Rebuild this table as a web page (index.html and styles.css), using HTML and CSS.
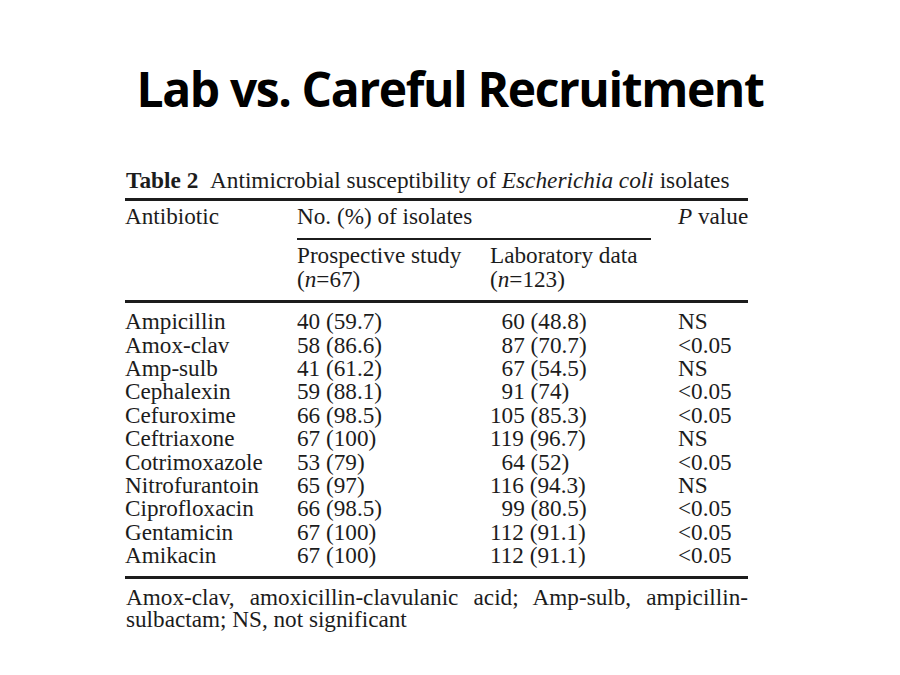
FILE: index.html
```html
<!DOCTYPE html>
<html>
<head>
<meta charset="utf-8">
<link rel="stylesheet" href="styles.css">
</head>
<body>
<div class="slide">
  <h1 class="title">Lab vs. Careful Recruitment</h1>
  <div class="figure">
    <div class="caption"><b>Table 2</b>&#8194;Antimicrobial susceptibility of <i>Escherichia coli</i> isolates</div>
    <table class="data">
      <colgroup>
        <col class="c1"><col class="c2"><col class="c3"><col class="c4">
      </colgroup>
      <thead>
        <tr class="h1row">
          <th>Antibiotic</th>
          <th colspan="2" class="span"><div class="spanlabel">No. (%) of isolates</div></th>
          <th><i>P</i> value</th>
        </tr>
        <tr class="h2row">
          <th></th>
          <th>Prospective study<br>(<i>n</i>=67)</th>
          <th>Laboratory data<br>(<i>n</i>=123)</th>
          <th></th>
        </tr>
      </thead>
      <tbody>
        <tr class="first"><td>Ampicillin</td><td>40 (59.7)</td><td>&#8199;60 (48.8)</td><td>NS</td></tr>
        <tr><td>Amox-clav</td><td>58 (86.6)</td><td>&#8199;87 (70.7)</td><td>&lt;0.05</td></tr>
        <tr><td>Amp-sulb</td><td>41 (61.2)</td><td>&#8199;67 (54.5)</td><td>NS</td></tr>
        <tr><td>Cephalexin</td><td>59 (88.1)</td><td>&#8199;91 (74)</td><td>&lt;0.05</td></tr>
        <tr><td>Cefuroxime</td><td>66 (98.5)</td><td>105 (85.3)</td><td>&lt;0.05</td></tr>
        <tr><td>Ceftriaxone</td><td>67 (100)</td><td>119 (96.7)</td><td>NS</td></tr>
        <tr><td>Cotrimoxazole</td><td>53 (79)</td><td>&#8199;64 (52)</td><td>&lt;0.05</td></tr>
        <tr><td>Nitrofurantoin</td><td>65 (97)</td><td>116 (94.3)</td><td>NS</td></tr>
        <tr><td>Ciprofloxacin</td><td>66 (98.5)</td><td>&#8199;99 (80.5)</td><td>&lt;0.05</td></tr>
        <tr><td>Gentamicin</td><td>67 (100)</td><td>112 (91.1)</td><td>&lt;0.05</td></tr>
        <tr class="last"><td>Amikacin</td><td>67 (100)</td><td>112 (91.1)</td><td>&lt;0.05</td></tr>
      </tbody>
    </table>
    <p class="note">Amox-clav, amoxicillin-clavulanic acid; Amp-sulb, ampicillin-sulbactam; NS, not significant</p>
  </div>
</div>
</body>
</html>
```

FILE: styles.css
```css
html, body {
  margin: 0;
  padding: 0;
  background: #ffffff;
}
.slide {
  width: 900px;
  height: 675px;
  overflow: hidden;
  display: flex;
  flex-direction: column;
  align-items: center;
}
.title {
  margin: 65px 0 0 0;
  font-family: "Open Sans", "Liberation Sans", sans-serif;
  font-weight: 700;
  font-size: 48px;
  line-height: 48px;
  letter-spacing: -1.4px;
  color: #000;
  white-space: nowrap;
}
.figure {
  align-self: flex-start;
  margin-top: 55px;
  margin-left: 125px;
  width: 623px;
  font-family: "Liberation Serif", "Times New Roman", serif;
  color: #1c1c1c;
}
.caption {
  font-size: 23.3px;
  line-height: 24px;
  padding-left: 1px;
  padding-bottom: 6px;
  white-space: nowrap;
}
.data {
  width: 623px;
  border-collapse: collapse;
  table-layout: fixed;
  font-size: 23.2px;
  line-height: 23.4px;
  border-top: 3px solid #1c1c1c;
  border-bottom: 3px solid #1c1c1c;
}
.c1 { width: 172px; }
.c2 { width: 193px; }
.c3 { width: 188px; }
.c4 { width: 70px; }
.data th, .data td {
  padding: 0;
  text-align: left;
  vertical-align: top;
  font-weight: 400;
  white-space: nowrap;
}
.h1row th {
  padding-top: 4px;
  padding-bottom: 10px;
}
.spanlabel {
  width: 354px;
  padding-bottom: 10px;
  border-bottom: 2px solid #1c1c1c;
}
.h1row th.span {
  padding-bottom: 0;
}
.h2row th {
  padding-top: 4px;
  padding-bottom: 9px;
}
.h2row {
  border-bottom: 3px solid #1c1c1c;
}
.data tbody tr.first td {
  padding-top: 7px;
}
.data tbody tr.last td {
  padding-bottom: 8px;
}
.note {
  margin: 7px 0 0 0;
  font-size: 23.2px;
  line-height: 22px;
  text-align: justify;
  padding-left: 1px;
}
```
